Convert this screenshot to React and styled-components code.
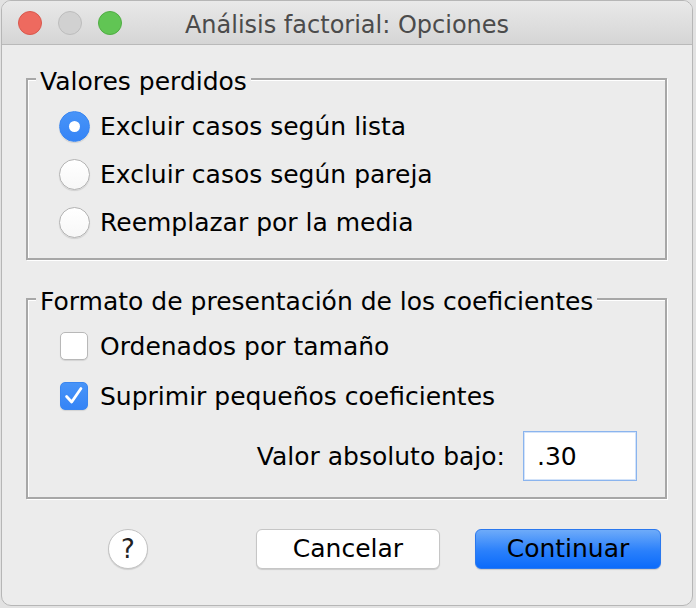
import React from 'react'
import styled, { createGlobalStyle } from 'styled-components'

const GlobalStyle = createGlobalStyle`
  html, body {
    margin: 0;
    padding: 0;
    background: #e2e2e2;
  }
  body {
    font-family: "DejaVu Sans", "Liberation Sans", sans-serif;
    color: #000;
  }
`

const Window = styled.div`
  margin-left: 1px;
  width: 692px;
  height: 606px;
  box-sizing: border-box;
  border: 1px solid #b6b6b6;
  border-radius: 10px;
  background: #ececec;
  overflow: hidden;
  display: flex;
  flex-direction: column;
`

const TitleBar = styled.div`
  height: 43px;
  flex: none;
  border-bottom: 1px solid #b9b9b9;
  background: linear-gradient(#e9e9e9, #d5d5d5);
  display: grid;
  grid-template-columns: 1fr auto 1fr;
  align-items: center;
`

const Lights = styled.div`
  display: flex;
  gap: 16px;
  padding-left: 16px;
`

const Light = styled.span`
  width: 24px;
  height: 24px;
  box-sizing: border-box;
  border-radius: 50%;
  background: ${p => p.$fill};
  border: 1px solid ${p => p.$edge};
`

const Title = styled.div`
  font-size: 24px;
  color: #4b4b4b;
  padding-top: 4px;
  white-space: nowrap;
`

const Body = styled.div`
  padding: 15px 25px 0 24px;
  display: flex;
  flex-direction: column;
`

const Group = styled.fieldset`
  margin: 0;
  min-width: 0;
  padding: 0 28px ${p => p.$bottom}px 30px;
  border: 2px solid #a7a7a7;
  box-shadow: inset 1px 1px 0 #fff, 1px 1px 0 #fff;

  & + & {
    margin-top: 20px;
  }
`

const Legend = styled.legend`
  margin-left: -22px;
  padding: 7px 4px 0;
  line-height: 30px;
  font-size: 25px;
  background: #ececec;
`

const Options = styled.div`
  display: flex;
  flex-direction: column;
  padding-top: ${p => p.$top}px;
`

const Option = styled.div`
  height: ${p => p.$h}px;
  display: flex;
  align-items: center;
  gap: 10px;
  font-size: 25px;
`

const Mark = styled.span`
  width: 32px;
  display: flex;
  justify-content: center;
  align-items: center;
`

const RadioDot = styled.span`
  width: 31px;
  height: 31px;
  box-sizing: border-box;
  border-radius: 50%;
  display: flex;
  align-items: center;
  justify-content: center;
  background: ${p => (p.$on ? 'linear-gradient(#4894f8, #3584f6)' : 'linear-gradient(#fff, #f7f7f7)')};
  border: 1px solid ${p => (p.$on ? '#3a86f0' : '#b3b3b3')};
  box-shadow: 0 1px 1px rgba(0, 0, 0, 0.12);

  &::after {
    content: '';
    display: ${p => (p.$on ? 'block' : 'none')};
    width: 11px;
    height: 11px;
    border-radius: 50%;
    background: #fff;
  }
`

const Box = styled.span`
  width: 28px;
  height: 28px;
  box-sizing: border-box;
  border-radius: 5px;
  display: flex;
  background: ${p => (p.$on ? 'linear-gradient(#4894f8, #3584f6)' : '#fff')};
  border: 1px solid ${p => (p.$on ? '#3a86f0' : '#b8b8b8')};
  box-shadow: 0 1px 1px rgba(0, 0, 0, 0.1);
`

const ValueRow = styled.div`
  margin-top: 10px;
  height: 50px;
  display: flex;
  align-items: center;
  justify-content: flex-end;
  gap: 18px;
  font-size: 25px;
`

const ValueInput = styled.div`
  width: 114px;
  height: 50px;
  box-sizing: border-box;
  border: 1px solid #8ab4ee;
  box-shadow: inset 0 0 0 1px #d3e3f9;
  background: #fff;
  display: flex;
  align-items: center;
  padding-left: 13px;
  font-size: 25px;
`

const Footer = styled.div`
  margin-top: 29px;
  height: 41px;
  display: flex;
  align-items: center;
  padding-left: 82px;
`

const HelpButton = styled.div`
  width: 40px;
  height: 40px;
  box-sizing: border-box;
  border-radius: 50%;
  background: #fff;
  border: 1px solid #c3c3c3;
  box-shadow: 0 1px 1px rgba(0, 0, 0, 0.12);
  display: flex;
  align-items: center;
  justify-content: center;
  font-size: 26px;
  color: #222;
`

const Button = styled.div`
  width: ${p => p.$w}px;
  height: 40px;
  box-sizing: border-box;
  margin-left: ${p => p.$gap}px;
  border-radius: 6px;
  display: flex;
  align-items: center;
  justify-content: center;
  font-size: 25px;
  color: #000;
  background: ${p => (p.$primary ? 'linear-gradient(#6eabf9, #2a80fb 55%, #0b6bfb)' : '#fff')};
  border: 1px solid ${p => (p.$primary ? '#2a78ee' : '#c6c6c6')};
  box-shadow: 0 1px 1px rgba(0, 0, 0, 0.14);
`

const Check = () => (
  <svg width="26" height="26" viewBox="0 0 28 28">
    <path d="M6 14.5 L11.5 20.5 L21.5 6" fill="none" stroke="#fff" strokeWidth="3" strokeLinecap="round" strokeLinejoin="round" />
  </svg>
)

const radios = [
  { label: 'Excluir casos según lista', on: true },
  { label: 'Excluir casos según pareja', on: false },
  { label: 'Reemplazar por la media', on: false },
]

const checks = [
  { label: 'Ordenados por tamaño', on: false },
  { label: 'Suprimir pequeños coeficientes', on: true },
]

export default function App() {
  return (
    <>
      <GlobalStyle />
      <Window>
        <TitleBar>
          <Lights>
            <Light $fill="#ee6a5f" $edge="#d9584d" />
            <Light $fill="#d1d1d1" $edge="#bdbdbd" />
            <Light $fill="#61c554" $edge="#50ad43" />
          </Lights>
          <Title>Análisis factorial: Opciones</Title>
          <span />
        </TitleBar>
        <Body>
          <Group $bottom={12}>
            <Legend>Valores perdidos</Legend>
            <Options $top={5}>
              {radios.map(r => (
                <Option key={r.label} $h={48}>
                  <Mark>
                    <RadioDot $on={r.on} />
                  </Mark>
                  {r.label}
                </Option>
              ))}
            </Options>
          </Group>
          <Group $bottom={16}>
            <Legend>Formato de presentación de los coeficientes</Legend>
            <Options $top={4}>
              {checks.map(c => (
                <Option key={c.label} $h={50}>
                  <Mark>
                    <Box $on={c.on}>{c.on && <Check />}</Box>
                  </Mark>
                  {c.label}
                </Option>
              ))}
            </Options>
            <ValueRow>
              Valor absoluto bajo:
              <ValueInput>.30</ValueInput>
            </ValueRow>
          </Group>
          <Footer>
            <HelpButton>?</HelpButton>
            <Button $w={184} $gap={108}>Cancelar</Button>
            <Button $w={186} $gap={35} $primary>Continuar</Button>
          </Footer>
        </Body>
      </Window>
    </>
  )
}
